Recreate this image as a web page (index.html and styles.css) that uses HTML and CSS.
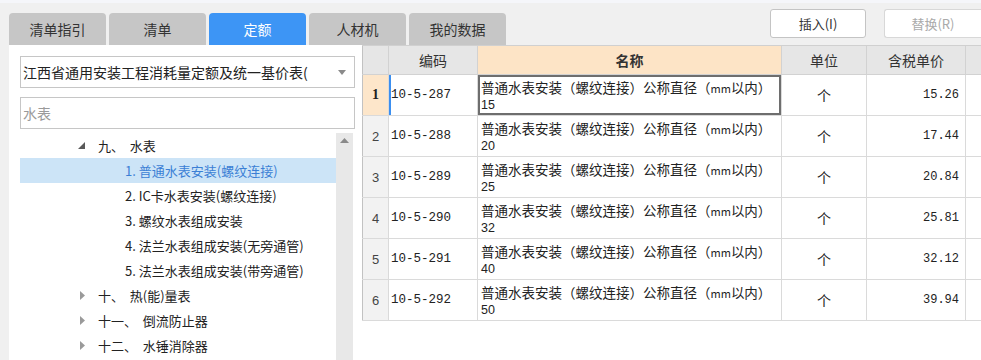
FILE: index.html
```html
<!DOCTYPE html>
<html lang="zh-CN">
<head>
  <meta charset="UTF-8">
  <title>定额查询</title>
  <link rel="stylesheet" href="styles.css">
</head>
<body>
  <!-- Tabs + action buttons -->
  <div class="top">
    <div class="tabs">
      <div class="tab">清单指引</div>
      <div class="tab">清单</div>
      <div class="tab active">定额</div>
      <div class="tab">人材机</div>
      <div class="tab">我的数据</div>
    </div>
    <div class="actions">
      <button class="btn">插入(I)</button>
      <button class="btn disabled">替换(R)</button>
    </div>
  </div>

  <div class="main">
    <!-- Left: library + tree -->
    <div class="left">
      <div class="select">
        <span class="select-text">江西省通用安装工程消耗量定额及统一基价表(</span>
        <svg class="select-arrow" width="8" height="5" viewBox="0 0 8 5"><polygon points="0,0 8,0 4,5" fill="#8a8a8a"/></svg>
      </div>
      <input class="search" type="text" value="水表">
      <div class="tree">
        <div class="tree-list">
          <div class="node lv1">
            <span class="twist"><svg width="7" height="7" viewBox="0 0 7 7"><polygon points="7,0 7,7 0,7" fill="#595959"/></svg></span>
            <span>九、  水表</span>
          </div>
          <div class="node lv2 selected">1. 普通水表安装(螺纹连接)</div>
          <div class="node lv2">2. IC卡水表安装(螺纹连接)</div>
          <div class="node lv2">3. 螺纹水表组成安装</div>
          <div class="node lv2">4. 法兰水表组成安装(无旁通管)</div>
          <div class="node lv2">5. 法兰水表组成安装(带旁通管)</div>
          <div class="node lv1">
            <span class="twist closed"><svg width="5" height="9" viewBox="0 0 5 9"><polygon points="0,0 5,4.5 0,9" fill="#9a9a9a"/></svg></span>
            <span>十、  热(能)量表</span>
          </div>
          <div class="node lv1">
            <span class="twist closed"><svg width="5" height="9" viewBox="0 0 5 9"><polygon points="0,0 5,4.5 0,9" fill="#9a9a9a"/></svg></span>
            <span>十一、  倒流防止器</span>
          </div>
          <div class="node lv1">
            <span class="twist closed"><svg width="5" height="9" viewBox="0 0 5 9"><polygon points="0,0 5,4.5 0,9" fill="#9a9a9a"/></svg></span>
            <span>十二、  水锤消除器</span>
          </div>
        </div>
        <div class="scrollbar">
          <svg width="9" height="5" viewBox="0 0 9 5"><polygon points="4.5,0 9,5 0,5" fill="#8a8a8a"/></svg>
        </div>
      </div>
    </div>

    <!-- Right: quota grid -->
    <div class="grid">
      <table class="quota">
        <colgroup>
          <col style="width:26px">
          <col style="width:89px">
          <col style="width:304px">
          <col style="width:85px">
          <col style="width:99px">
          <col style="width:60px">
        </colgroup>
        <thead>
          <tr>
            <th class="num"></th>
            <th>编码</th>
            <th class="name-head">名称</th>
            <th>单位</th>
            <th>含税单价</th>
            <th></th>
          </tr>
        </thead>
        <tbody id="rows"></tbody>
      </table>
    </div>
  </div>

  <script>
    const rows = [
      { code: '10-5-287', size: '15', price: '15.26' },
      { code: '10-5-288', size: '20', price: '17.44' },
      { code: '10-5-289', size: '25', price: '20.84' },
      { code: '10-5-290', size: '32', price: '25.81' },
      { code: '10-5-291', size: '40', price: '32.12' },
      { code: '10-5-292', size: '50', price: '39.94' }
    ];

    const body = document.getElementById('rows');
    rows.forEach((row, i) => {
      const tr = document.createElement('tr');
      if (i === 0) tr.className = 'current';
      tr.innerHTML = `
        <td class="num">${i + 1}</td>
        <td class="code">${row.code}</td>
        <td class="name"><span class="name-main">普通水表安装（螺纹连接）公称直径（<small>mm</small>以内）</span><span class="name-size">${row.size}</span></td>
        <td class="unit">个</td>
        <td class="price">${row.price}</td>
        <td></td>
      `;
      body.appendChild(tr);
    });
  </script>
</body>
</html>
```

FILE: styles.css
```css
/* General */
body {
  margin: 0;
  width: 981px;
  height: 360px;
  overflow: hidden;
  background: #f0f0f0;
  font-family: "Noto Sans CJK SC", "Microsoft YaHei", sans-serif;
  font-size: 14px;
  color: #333;
  border-top: 3px solid #f5f6fa;
  box-sizing: border-box;
}

/* Top bar */
.top {
  display: flex;
  height: 42px;
  padding-left: 9px;
}

.tabs {
  display: flex;
  gap: 3px;
  align-self: flex-end;
}

.tab {
  width: 97px;
  height: 32px;
  line-height: 32px;
  text-align: center;
  background: #c6c6c6;
  border-radius: 4px 4px 0 0;
  color: #333;
}

.tab.active {
  background: #3d95f5;
  color: white;
}

.actions {
  margin-left: auto;
  display: flex;
  gap: 18px;
  padding-top: 6px;
}

.btn {
  width: 96px;
  height: 29px;
  background: white;
  border: 1px solid #c4c4c4;
  border-radius: 3px;
  font-family: inherit;
  font-size: 13px;
  color: #333;
  padding: 0;
}

.btn.disabled {
  width: 97px;
  color: #aaa;
  border-color: #d8d8d8;
  border-right: none;
  border-radius: 3px 0 0 3px;
}

/* Main */
.main {
  display: flex;
  height: 315px;
}

/* Left panel */
.left {
  margin-left: 9px;
  width: 353px;
  background: white;
  padding: 11px 0 0 11px;
  box-sizing: border-box;
  display: flex;
  flex-direction: column;
}

.select {
  width: 335px;
  height: 32px;
  box-sizing: border-box;
  border: 1px solid #c6c6c6;
  display: flex;
  align-items: center;
  padding-left: 2px;
}

.select-text {
  flex: 1;
  overflow: hidden;
  white-space: nowrap;
  color: #222;
}

.select-arrow {
  margin: 0 8px 0 10px;
}

.search {
  margin-top: 9px;
  width: 335px;
  height: 32px;
  box-sizing: border-box;
  border: 1px solid #c6c6c6;
  padding: 0 2px;
  font-family: inherit;
  font-size: 14px;
  color: #9a9a9a;
  outline: none;
}

.tree {
  margin-top: 4px;
  flex: 1;
  display: flex;
}

.tree-list {
  width: 316px;
}

.node {
  height: 25px;
  line-height: 25px;
  font-size: 13px;
  color: #222;
  white-space: pre;
  display: flex;
  align-items: center;
}

.node.lv1 {
  padding-left: 58px;
}

.twist {
  width: 20px;
  flex: none;
  display: flex;
  align-items: center;
}

.twist.closed {
  padding-left: 2px;
  box-sizing: border-box;
}

.node.lv2 {
  padding-left: 105px;
}

.node.selected {
  background: #cce4f7;
  color: #3b7fd5;
}

.scrollbar {
  width: 17px;
  background: #e8e8e8;
  display: flex;
  justify-content: center;
  padding-top: 5px;
  box-sizing: border-box;
}

/* Grid */
.grid {
  flex: 1;
  background: white;
  overflow: hidden;
  border-top: 1px solid #d0d0d0;
  box-sizing: border-box;
}

.quota {
  table-layout: fixed;
  border-collapse: collapse;
  width: 663px;
}

.quota th {
  height: 28px;
  padding: 0;
  background: #e6e6e6;
  font-weight: normal;
  font-size: 14px;
  color: #333;
  border: 1px solid #d2d2d2;
  border-top: none;
}

.quota th.name-head {
  background: #fde4c6;
  font-weight: bold;
}

.quota td {
  height: 40px;
  padding: 0;
  border: 1px solid #dadada;
  font-size: 13px;
  color: #222;
}

.quota .num {
  background: #f2f2f2;
  text-align: center;
  border-left: 1px solid #c2c2c2;
  color: #444;
  font-family: "Liberation Sans", sans-serif;
}

.quota th.num {
  background: #e6e6e6;
}

.quota tr.current .num {
  background: #fde6ca;
  font-family: "Liberation Serif", serif;
  font-weight: bold;
  font-size: 14px;
  color: #222;
}

.quota .code {
  padding-left: 2px;
  font-family: "Liberation Mono", monospace;
  font-size: 12.5px;
}

.quota tr.current .code {
  box-shadow: inset 2px 0 0 #3b8ff0;
}

.quota .name {
  padding-left: 3px;
}

.quota .name span {
  display: block;
  white-space: nowrap;
}

.quota .name-main {
  font-size: 13.5px;
  line-height: 19px;
}

.quota .name-size {
  font-family: "Liberation Sans", sans-serif;
  font-size: 12.5px;
  line-height: 14px;
}

.quota .name small {
  font-size: 11px;
}

.quota tr.current .name {
  box-shadow: inset 0 0 0 2px #6e6e6e;
}

.quota .unit {
  text-align: center;
  font-size: 14px;
}

.quota .price {
  text-align: right;
  padding-right: 6px;
  font-family: "Liberation Mono", monospace;
  font-size: 12px;
}
```
